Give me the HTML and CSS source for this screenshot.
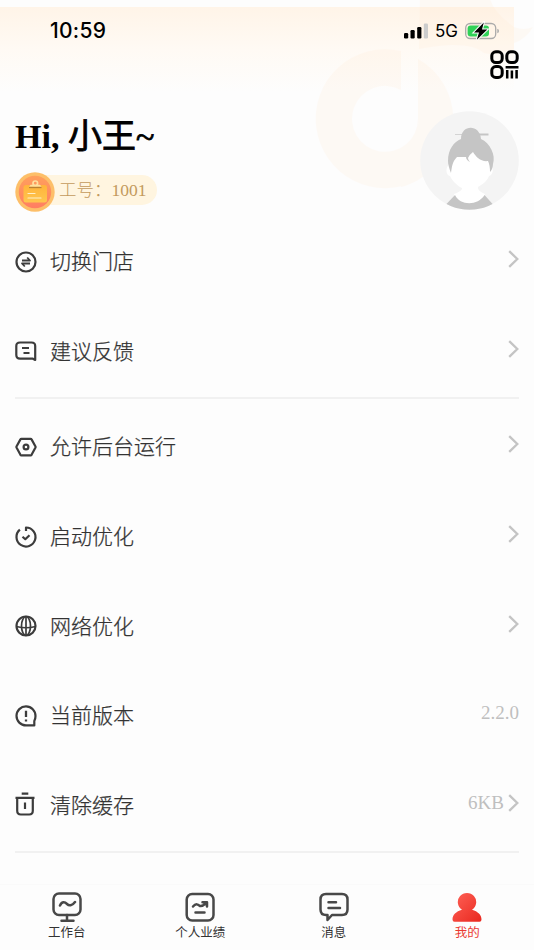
FILE: index.html
```html
<!DOCTYPE html>
<html lang="zh-CN">
<head>
    <meta charset="UTF-8">
    <meta name="viewport" content="width=device-width, initial-scale=1.0">
    <title>我的</title>
    <link rel="stylesheet" href="styles.css">
</head>
<body>
    <div class="header-bg"></div>
    <svg class="header-logo" width="234" height="200" viewBox="300 0 234 200">
        <path d="M401 52A69.500 69.500 0 1 0 418 181V120A33 33 0 1 1 401 91Z"/>
        <path d="M401 152.500A33 33 0 0 0 418 120V60A69.500 69.500 0 0 1 418 181C412 184 406 187 401 188Z"/>
        <path d="M420 0H490Q494 14 514 28Q524 32 533 28Q526 40 514 44V50Q496 57 484 54C474 46 456 43 419 50Z"/>
    </svg>

    <header class="status-bar">
        <span class="time">10:59</span>
        <div class="status-right">
            <svg width="24" height="16" viewBox="0 0 24 16">
                <rect x="0" y="10" width="4.200" height="5.500" rx="1.200"/>
                <rect x="6.500" y="7" width="4.200" height="8.500" rx="1.200"/>
                <rect x="13.200" y="4" width="4.200" height="11.500" rx="1.200"/>
                <rect x="19.800" y="0.500" width="4.200" height="15" rx="1.200" fill="#ccc"/>
            </svg>
            <span class="network">5G</span>
            <svg width="35" height="20" viewBox="0 0 35 20">
                <rect x="0.700" y="2.500" width="30" height="15" rx="4.500" fill="none" stroke="#aaa" stroke-width="1.300"/>
                <rect x="2.600" y="4.500" width="21.400" height="11" rx="3" fill="#30d158"/>
                <path d="M32.300 7.800Q34 8.300 34 10T32.300 12.200Z" fill="#aaa"/>
                <path d="M18.800 1.400L9 11.400H14L11.800 18.800L22.300 8.400H17Z" stroke="#fff" stroke-width="2" paint-order="stroke"/>
            </svg>
        </div>
    </header>

    <main class="page">
        <div class="toolbar">
            <svg width="29" height="29" viewBox="0 0 29 29" fill="none" stroke="#000" stroke-width="3">
                <rect x="1.800" y="1.800" width="10.400" height="10.800" rx="4"/>
                <rect x="16.800" y="1.800" width="10.400" height="10.800" rx="4"/>
                <rect x="1.800" y="16.600" width="10.400" height="10.800" rx="4"/>
                <path d="M15.600 17.300H28.500M17.200 20V28.500M21.900 20.500V28.500M26.600 20V28.500" stroke-width="2.500"/>
            </svg>
        </div>

        <section class="profile">
            <div class="profile-info">
                <h1>Hi, <span class="name">小王~</span></h1>
                <div class="badge">
                    <svg class="badge-icon" width="40" height="40" viewBox="0 0 40 40">
                        <defs>
                            <linearGradient id="coin" x1="0" y1="0" x2="0" y2="1">
                                <stop offset="0" stop-color="#ffa05c"/>
                                <stop offset="1" stop-color="#ff7e62"/>
                            </linearGradient>
                            <linearGradient id="note" x1="0" y1="0" x2="0" y2="1">
                                <stop offset="0" stop-color="#ffb43b"/>
                                <stop offset="1" stop-color="#ffc64f"/>
                            </linearGradient>
                        </defs>
                        <circle cx="20" cy="20" r="19.700" fill="#fdbf69"/>
                        <circle cx="20" cy="20" r="16.200" fill="url(#coin)"/>
                        <rect x="8.500" y="13" width="23.500" height="17.500" rx="2.500" fill="url(#note)"/>
                        <circle cx="20.300" cy="11.300" r="2.300" fill="none" stroke="#ffe1a0" stroke-width="1.700"/>
                        <path d="M14 14.700H26.500L25 12.700H15.500Z" fill="#ffe1a0"/>
                        <path d="M14 15.500H26.500" stroke="#b98235" stroke-width="1.300"/>
                        <path d="M13 21.500H20M13 26H26" stroke="#fff0c8" stroke-width="1.200" stroke-linecap="round"/>
                    </svg>
                    <span>工号：1001</span>
                </div>
            </div>
            <svg class="avatar" width="99" height="99" viewBox="0 0 99 99">
                <defs>
                    <clipPath id="round"><circle cx="49.500" cy="49.500" r="49.300"/></clipPath>
                </defs>
                <g clip-path="url(#round)">
                    <rect width="99" height="99" fill="#f4f4f4"/>
                    <path d="M35 23.500H55" stroke="#d4d4d4" stroke-width="1"/>
                    <path d="M55 23.500H68.500" stroke="#c5c5c5" stroke-width="2"/>
                    <path d="M29 53C25 58 26 64 30 65C33 71 38 75 42 77V78Q40 81 34 83V99H65V83Q58 80 58 77V76Q67 71 69 65C73 64 74 58 71 54Z" fill="#fff"/>
                    <path d="M29 50Q34 43 47 43L54 40L70 48V60C68 70 57 76 50 76S33 70 30 60Z" fill="#fff"/>
                    <path d="M41 28C41 13 60 13 61 28C70 32 76 44 73 53C73 57 71 60 70 61Q70 54 68 50C61 51 56 46 53 41Q49 44 48 47Q48 49 50 51Q46 49 46 46H37C32 51 32 56 31 62C29 57 28 53 28 50C28 38 34 31 41 28Z" fill="#c5c5c5"/>
                    <path d="M25.500 94L35 84C40 95 58 95 64.500 84L73.500 94V99H25.500Z" fill="#c5c5c5"/>
                </g>
            </svg>
        </section>

        <ul class="menu">
            <li class="menu-item">
                <svg class="icon" viewBox="0 0 22 22">
                    <circle cx="11" cy="11" r="9.500"/>
                    <path d="M7 9.500H15L12.200 6.500M15 12.500H7L9.800 15.500" stroke-width="1.800"/>
                </svg>
                <span class="label">切换门店</span>
                <svg class="arrow" viewBox="0 0 11 18"><path d="M1.200 1.200L9.300 9L1.200 16.800"/></svg>
            </li>
            <li class="menu-item">
                <svg class="icon" viewBox="0 0 22 22">
                    <path d="M5 2.500H16.500Q20.200 2.500 20.200 6V20L17.500 18.600H5Q1.300 18.600 1.300 15V6Q1.300 2.500 5 2.500Z"/>
                    <path d="M7 8H14M8.500 13H14.500" stroke-width="1.900"/>
                </svg>
                <span class="label">建议反馈</span>
                <svg class="arrow" viewBox="0 0 11 18"><path d="M1.200 1.200L9.300 9L1.200 16.800"/></svg>
            </li>
        </ul>

        <ul class="menu system">
            <li class="menu-item">
                <svg class="icon" viewBox="0 0 22 22">
                    <path d="M6.400 2.900H15.600Q16.300 2.900 16.700 3.600L20.500 10.500Q20.700 11 20.500 11.500L16.700 18.600Q16.300 19.300 15.600 19.300H6.400Q5.700 19.300 5.300 18.600L1.500 11.500Q1.300 11 1.500 10.500L5.300 3.600Q5.700 2.900 6.400 2.900Z"/>
                    <circle cx="11" cy="11" r="2.400"/>
                </svg>
                <span class="label">允许后台运行</span>
                <svg class="arrow" viewBox="0 0 11 18"><path d="M1.200 1.200L9.300 9L1.200 16.800"/></svg>
            </li>
            <li class="menu-item">
                <svg class="icon" viewBox="0 0 22 22">
                    <path d="M4.900 3.700A9.500 9.500 0 1 0 11 1.500V5"/>
                    <path d="M7.500 10.700L10.300 13.200L14.500 9.200"/>
                </svg>
                <span class="label">启动优化</span>
                <svg class="arrow" viewBox="0 0 11 18"><path d="M1.200 1.200L9.300 9L1.200 16.800"/></svg>
            </li>
            <li class="menu-item">
                <svg class="icon" viewBox="0 0 22 22">
                    <circle cx="11" cy="11" r="9.500"/>
                    <ellipse cx="11" cy="11" rx="4.500" ry="9.500" stroke-width="1.700"/>
                    <path d="M11 1.500V20.500M1.500 11.500Q11 14 20.500 11.500" stroke-width="1.700"/>
                </svg>
                <span class="label">网络优化</span>
                <svg class="arrow" viewBox="0 0 11 18"><path d="M1.200 1.200L9.300 9L1.200 16.800"/></svg>
            </li>
            <li class="menu-item">
                <svg class="icon" viewBox="0 0 22 22">
                    <path d="M11 20.400A9.500 9.500 0 1 1 20.500 11Q20.500 14 19.300 16V20.400Z"/>
                    <path d="M11 5.800V12M11 14.500V16.500" stroke-width="2.300"/>
                </svg>
                <span class="label">当前版本</span>
                <span class="value">2.2.0</span>
            </li>
            <li class="menu-item">
                <svg class="icon" viewBox="0 0 22 22">
                    <path d="M0.500 3.900H19.500M6.700 -0.300H13.300M2.200 4V16.800Q2.200 20.500 5.800 20.500H14.200Q17.800 20.500 17.800 16.800V4M10 8.500V15"/>
                </svg>
                <span class="label">清除缓存</span>
                <span class="value">6KB</span>
                <svg class="arrow" viewBox="0 0 11 18"><path d="M1.200 1.200L9.300 9L1.200 16.800"/></svg>
            </li>
        </ul>
    </main>

    <nav class="tabbar">
        <a class="tab">
            <svg viewBox="0 0 30 30">
                <rect x="1.500" y="1.500" width="27" height="21.500" rx="5.500"/>
                <path d="M15 23V28.500M9.500 28.800H21.500M8 13.500C10 9 13 10 15 12S20 14 23 10"/>
            </svg>
            <span>工作台</span>
        </a>
        <a class="tab">
            <svg viewBox="0 0 30 30">
                <rect x="1.700" y="2" width="26.800" height="26.500" rx="5.500"/>
                <path d="M8 14.500C11 11 13 12.500 15 14C18 14.500 20 12 22 10.500M17.500 10.200H22V14.500M10.500 20.500H19.500"/>
            </svg>
            <span>个人业绩</span>
        </a>
        <a class="tab">
            <svg viewBox="0 0 30 30">
                <path d="M7 2H23Q28.500 2 28.500 7.500V17.500Q28.500 23 23 23H13L8.500 28V23H7Q1.500 23 1.500 17.500V7.500Q1.500 2 7 2Z"/>
                <path d="M9.500 10.200H17M9.500 16H21"/>
            </svg>
            <span>消息</span>
        </a>
        <a class="tab active">
            <svg viewBox="0 0 30 30">
                <defs>
                    <linearGradient id="me" x1="0" y1="0" x2="1" y2="1">
                        <stop offset="0" stop-color="#ff6257"/>
                        <stop offset="1" stop-color="#e9281f"/>
                    </linearGradient>
                </defs>
                <path d="M10 17.800A9.200 9.200 0 1 1 20 17.800C26 19.500 29.500 23 29.500 27.500Q29.500 29.700 27.500 29.700H2.500Q0.500 29.700 0.500 27.500C0.500 23 4 19.500 10 17.800Z" fill="url(#me)" stroke="none"/>
            </svg>
            <span>我的</span>
        </a>
    </nav>
</body>
</html>
```

FILE: styles.css
```css
* {
    box-sizing: border-box;
}
body {
    position: relative;
    display: flex;
    flex-direction: column;
    width: 534px;
    height: 950px;
    margin: 0;
    overflow: hidden;
    background-color: #fdfdfd;
    font-family: "Liberation Serif", "Noto Sans CJK SC", serif;
    color: #333;
}
svg {
    display: block;
    flex-shrink: 0;
}
.header-bg {
    position: absolute;
    top: 7px;
    left: 0;
    width: 514px;
    height: 85px;
    background: linear-gradient(#fff4e8, #fffaf4 50%, #fdfdfd);
}
.header-logo {
    position: absolute;
    top: -1px;
    right: 0;
    fill: #ffe3c0;
    opacity: 0.13;
}
.status-bar {
    position: relative;
    display: flex;
    justify-content: space-between;
    align-items: center;
    height: 48px;
    padding: 14px 34px 0 50px;
    color: #000;
    font-family: Inter, sans-serif;
}
.time {
    margin-top: -1px;
    font-size: 21px;
    font-weight: 500;
    letter-spacing: 0.3px;
}
.status-right {
    display: flex;
    align-items: center;
}
.network {
    margin: 0 7px;
    font-size: 17px;
}
.page {
    position: relative;
    flex: 1;
    padding: 0 15px;
}
.toolbar {
    display: flex;
    justify-content: flex-end;
    padding-top: 2px;
}
.profile {
    display: flex;
    justify-content: space-between;
    margin-top: 32px;
    height: 102px;
}
h1 {
    margin: 0;
    padding-top: 4px;
    height: 61px;
    font-size: 34px;
    line-height: 44px;
    color: #000;
    white-space: nowrap;
}
.name {
    font-weight: 400;
    -webkit-text-stroke: 0.800px #000;
}
.badge {
    display: flex;
    align-items: center;
    height: 40px;
}
.badge-icon {
    position: relative;
    z-index: 1;
}
.badge span {
    height: 30px;
    margin: -5px 0 0 -20px;
    padding: 0 10px 0 24px;
    border-radius: 0 15px 15px 0;
    background-color: #fff5e0;
    color: #c39a5d;
    font-size: 17.500px;
    font-weight: 300;
    line-height: 30px;
    white-space: nowrap;
}
.menu {
    margin: 0;
    padding: 4px 0 1px;
    list-style: none;
    border-bottom: 2px solid #f1f1f1;
}
.menu.system {
    padding-top: 3px;
}
.menu-item {
    display: flex;
    align-items: center;
    height: 89.600px;
}
.icon {
    width: 22px;
    height: 22px;
    margin-right: 13px;
    overflow: visible;
    fill: none;
    stroke: #3c3c3c;
    stroke-width: 2.200;
    stroke-linejoin: round;
}
.label {
    flex: 1;
    padding-top: 1px;
    font-size: 21px;
    font-weight: 300;
    line-height: 30px;
    -webkit-text-stroke: 0.250px #333;
}
.arrow {
    width: 11px;
    height: 18px;
    margin: -5px 0 0 4px;
    fill: none;
    stroke: #c4c4c4;
    stroke-width: 2.300;
}
.value {
    margin-top: -5px;
    color: #bfbfbf;
    font-size: 19px;
}
.tabbar {
    display: flex;
    height: 66px;
    border-top: 1px solid #fafafa;
}
.tab {
    display: flex;
    flex: 1;
    flex-direction: column;
    align-items: center;
    padding-top: 7px;
    font-size: 12.500px;
    line-height: 18px;
}
.tab svg {
    width: 30px;
    height: 30px;
    margin-bottom: 2px;
    fill: none;
    stroke: #484848;
    stroke-width: 2.500;
    stroke-linecap: round;
    stroke-linejoin: round;
}
.tab.active {
    color: #ea3a32;
}
```
